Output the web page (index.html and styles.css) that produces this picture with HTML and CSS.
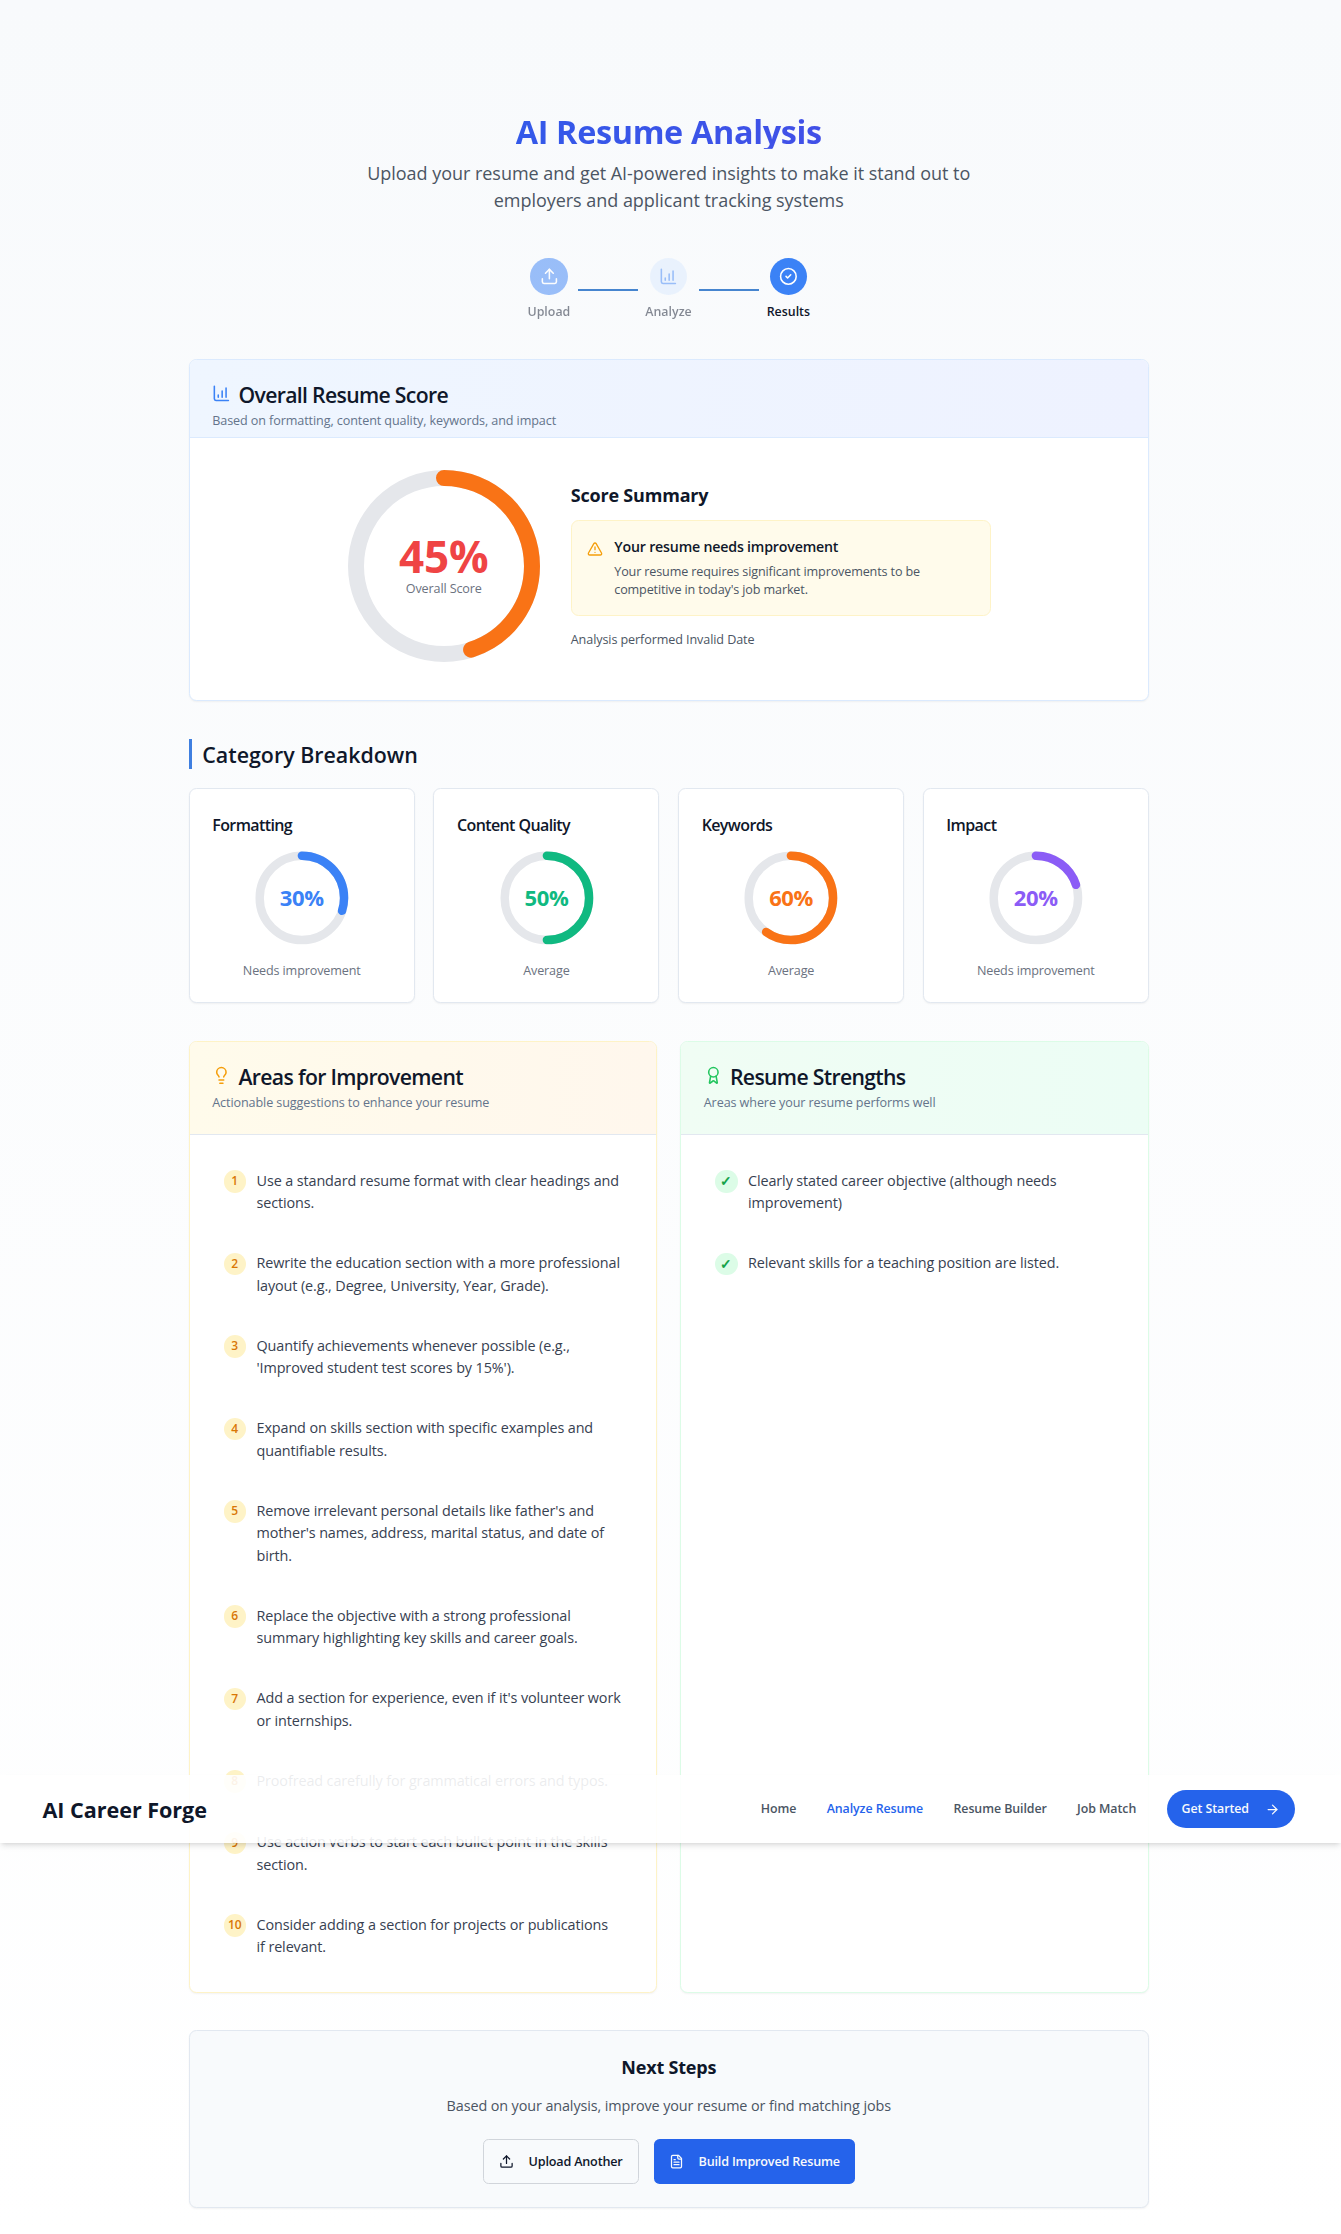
FILE: index.html
```html
<!DOCTYPE html>
<html lang="en">
<head>
<meta charset="utf-8">
<title>AI Resume Analysis</title>
<link rel="stylesheet" href="styles.css">
</head>
<body>
<main class="page">
  <section class="hero">
    <h1 class="hero-title">AI Resume Analysis</h1>
    <p class="hero-text">Upload your resume and get AI-powered insights to make it stand out to<br>employers and applicant tracking systems</p>
  </section>

  <div class="steps">
    <div class="step step-done">
      <span class="step-dot dot-blue"><svg class="icon" viewBox="0 0 24 24"><path d="M12 3v12"/><path d="m17 8-5-5-5 5"/><path d="M21 15v4a2 2 0 0 1-2 2H5a2 2 0 0 1-2-2v-4"/></svg></span>
      <span class="step-label">Upload</span>
    </div>
    <span class="step-line"></span>
    <div class="step step-done">
      <span class="step-dot dot-pale"><svg class="icon" viewBox="0 0 24 24"><path d="M3 3v16a2 2 0 0 0 2 2h16"/><path d="M18 17V5"/><path d="M13 17V9"/><path d="M8 17v-3"/></svg></span>
      <span class="step-label">Analyze</span>
    </div>
    <span class="step-line"></span>
    <div class="step">
      <span class="step-dot dot-blue"><svg class="icon" viewBox="0 0 24 24"><circle cx="12" cy="12" r="10"/><path d="m9 12 2 2 4-4"/></svg></span>
      <span class="step-label">Results</span>
    </div>
  </div>

  <section class="card score-card">
    <header class="card-head head-blue">
      <h2 class="card-title"><svg class="icon icon-blue" viewBox="0 0 24 24"><path d="M3 3v16a2 2 0 0 0 2 2h16"/><path d="M18 17V5"/><path d="M13 17V9"/><path d="M8 17v-3"/></svg><span>Overall Resume Score</span></h2>
      <p class="card-desc">Based on formatting, content quality, keywords, and impact</p>
    </header>
    <div class="score-body">
      <div class="gauge gauge-lg">
        <svg viewBox="0 0 192 192"><circle class="track" cx="96" cy="96" r="88"/><circle class="arc arc-orange" cx="96" cy="96" r="88" pathLength="100" stroke-dasharray="45 100"/></svg>
        <div class="gauge-label"><strong class="score">45%</strong><span class="score-caption">Overall Score</span></div>
      </div>
      <div class="summary">
        <h3 class="sub-title">Score Summary</h3>
        <div class="alert">
          <svg class="icon alert-icon" viewBox="0 0 24 24"><path d="m21.73 18-8-14a2 2 0 0 0-3.48 0l-8 14A2 2 0 0 0 4 21h16a2 2 0 0 0 1.73-3"/><path d="M12 9v4"/><path d="M12 17h.01"/></svg>
          <div>
            <h4 class="alert-title">Your resume needs improvement</h4>
            <p class="alert-text">Your resume requires significant improvements to be<br>competitive in today's job market.</p>
          </div>
        </div>
        <p class="performed">Analysis performed Invalid Date</p>
      </div>
    </div>
  </section>

  <h2 class="section-title">Category Breakdown</h2>
  <section class="categories">
    <article class="card category">
      <h3 class="category-title">Formatting</h3>
      <div class="gauge gauge-sm">
        <svg viewBox="0 0 100 100"><circle class="track" cx="50" cy="50" r="45"/><circle class="arc arc-blue" cx="50" cy="50" r="45" pathLength="100" stroke-dasharray="30 100"/></svg>
        <strong class="gauge-label text-blue">30%</strong>
      </div>
      <p class="category-note">Needs improvement</p>
    </article>
    <article class="card category">
      <h3 class="category-title">Content Quality</h3>
      <div class="gauge gauge-sm">
        <svg viewBox="0 0 100 100"><circle class="track" cx="50" cy="50" r="45"/><circle class="arc arc-green" cx="50" cy="50" r="45" pathLength="100" stroke-dasharray="50 100"/></svg>
        <strong class="gauge-label text-green">50%</strong>
      </div>
      <p class="category-note">Average</p>
    </article>
    <article class="card category">
      <h3 class="category-title">Keywords</h3>
      <div class="gauge gauge-sm">
        <svg viewBox="0 0 100 100"><circle class="track" cx="50" cy="50" r="45"/><circle class="arc arc-orange" cx="50" cy="50" r="45" pathLength="100" stroke-dasharray="60 100"/></svg>
        <strong class="gauge-label text-orange">60%</strong>
      </div>
      <p class="category-note">Average</p>
    </article>
    <article class="card category">
      <h3 class="category-title">Impact</h3>
      <div class="gauge gauge-sm">
        <svg viewBox="0 0 100 100"><circle class="track" cx="50" cy="50" r="45"/><circle class="arc arc-violet" cx="50" cy="50" r="45" pathLength="100" stroke-dasharray="20 100"/></svg>
        <strong class="gauge-label text-violet">20%</strong>
      </div>
      <p class="category-note">Needs improvement</p>
    </article>
  </section>

  <section class="panels">
    <article class="card panel panel-amber">
      <header class="card-head head-amber">
        <h2 class="card-title"><svg class="icon icon-amber" viewBox="0 0 24 24"><path d="M15 14c.2-1 .7-1.7 1.5-2.5 1-.9 1.5-2.2 1.5-3.5A6 6 0 0 0 6 8c0 1 .2 2.2 1.5 3.5.7.7 1.3 1.5 1.5 2.5"/><path d="M9 18h6"/><path d="M10 22h4"/></svg><span>Areas for Improvement</span></h2>
        <p class="card-desc">Actionable suggestions to enhance your resume</p>
      </header>
      <ol class="items">
        <li class="item"><span class="badge badge-amber">1</span><p>Use a standard resume format with clear headings and<br>sections.</p></li>
        <li class="item"><span class="badge badge-amber">2</span><p>Rewrite the education section with a more professional<br>layout (e.g., Degree, University, Year, Grade).</p></li>
        <li class="item"><span class="badge badge-amber">3</span><p>Quantify achievements whenever possible (e.g.,<br>'Improved student test scores by 15%').</p></li>
        <li class="item"><span class="badge badge-amber">4</span><p>Expand on skills section with specific examples and<br>quantifiable results.</p></li>
        <li class="item"><span class="badge badge-amber">5</span><p>Remove irrelevant personal details like father's and<br>mother's names, address, marital status, and date of<br>birth.</p></li>
        <li class="item"><span class="badge badge-amber">6</span><p>Replace the objective with a strong professional<br>summary highlighting key skills and career goals.</p></li>
        <li class="item"><span class="badge badge-amber">7</span><p>Add a section for experience, even if it's volunteer work<br>or internships.</p></li>
        <li class="item"><span class="badge badge-amber">8</span><p>Proofread carefully for grammatical errors and typos.</p></li>
        <li class="item"><span class="badge badge-amber">9</span><p>Use action verbs to start each bullet point in the skills<br>section.</p></li>
        <li class="item"><span class="badge badge-amber">10</span><p>Consider adding a section for projects or publications<br>if relevant.</p></li>
      </ol>
    </article>
    <article class="card panel panel-green">
      <header class="card-head head-green">
        <h2 class="card-title"><svg class="icon icon-green" viewBox="0 0 24 24"><path d="m15.477 12.89 1.515 8.526a.5.5 0 0 1-.81.47l-3.58-2.687a1 1 0 0 0-1.197 0l-3.586 2.686a.5.5 0 0 1-.81-.469l1.514-8.526"/><circle cx="12" cy="8" r="6"/></svg><span>Resume Strengths</span></h2>
        <p class="card-desc">Areas where your resume performs well</p>
      </header>
      <ul class="items">
        <li class="item"><span class="badge badge-green">✓</span><p>Clearly stated career objective (although needs<br>improvement)</p></li>
        <li class="item"><span class="badge badge-green">✓</span><p>Relevant skills for a teaching position are listed.</p></li>
      </ul>
    </article>
  </section>

  <section class="card next">
    <h3 class="sub-title">Next Steps</h3>
    <p class="next-text">Based on your analysis, improve your resume or find matching jobs</p>
    <div class="actions">
      <button class="btn btn-outline"><svg class="icon" viewBox="0 0 24 24"><path d="M12 3v12"/><path d="m17 8-5-5-5 5"/><path d="M21 15v4a2 2 0 0 1-2 2H5a2 2 0 0 1-2-2v-4"/></svg><span>Upload Another</span></button>
      <button class="btn btn-primary"><svg class="icon" viewBox="0 0 24 24"><path d="M15 2H6a2 2 0 0 0-2 2v16a2 2 0 0 0 2 2h12a2 2 0 0 0 2-2V7Z"/><path d="M14 2v4a2 2 0 0 0 2 2h4"/><path d="M10 9H8"/><path d="M16 13H8"/><path d="M16 17H8"/></svg><span>Build Improved Resume</span></button>
    </div>
  </section>
</main>

<header class="navbar">
  <a class="brand">AI Career Forge</a>
  <nav class="nav">
    <a class="nav-link">Home</a>
    <a class="nav-link active">Analyze Resume</a>
    <a class="nav-link">Resume Builder</a>
    <a class="nav-link">Job Match</a>
    <button class="cta"><span>Get Started</span><svg class="icon" viewBox="0 0 24 24"><path d="M5 12h14"/><path d="m12 5 7 7-7 7"/></svg></button>
  </nav>
</header>
</body>
</html>
```
FILE: styles.css
```css
* { box-sizing: border-box; }
body, h1, h2, h3, h4, p, ol, ul { margin: 0; padding: 0; font-weight: inherit; }
body {
  min-height: 2234px;
  font-family: "Open Sans", "Noto Sans", sans-serif;
  font-size: 14.4px;
  line-height: 22.5px;
  color: #0f172a;
  background: linear-gradient(to bottom, #f8fafc, #ffffff);
}
button { font: inherit; letter-spacing: inherit; border: 0; }
.icon {
  width: 18.75px; height: 18.75px; flex: none;
  fill: none; stroke: currentColor; stroke-width: 2; stroke-linecap: round; stroke-linejoin: round;
}
.page { width: 960px; margin: 0 0 0 188.75px; padding-top: 115px; }

.hero { text-align: center; }
.hero-title {
  width: max-content; margin: 0 auto;
  font-size: 32.4px; font-weight: 700; line-height: 33.75px; letter-spacing: -.34px;
  background: linear-gradient(to right, #2563eb, #4f46e5); background-size: 960px; background-position: center;
  -webkit-background-clip: text; background-clip: text; color: transparent;
}
.hero-text { margin-top: 11.25px; font-size: 18px; line-height: 27px; letter-spacing: -.03px; color: #4b5563; }

.steps { display: flex; justify-content: center; align-items: center; margin-top: 43.75px; }
.step { display: flex; flex-direction: column; align-items: center; }
.step-done { opacity: .5; }
.step-dot { display: grid; place-items: center; width: 37.5px; height: 37.5px; border-radius: 50%; }
.dot-blue { background: #3b82f6; color: #fff; }
.dot-pale { background: #dbeafe; color: #3b82f6; }
.step-label { margin-top: 8px; font-size: 12.4px; font-weight: 600; line-height: 18.75px; }
.step-line { width: 60px; height: 2px; margin: 0 7.5px; background: #4685cf; }

.card { background: #fff; border: 1px solid #e2e8f0; border-radius: 7.5px; box-shadow: 0 1px 2px rgba(0,0,0,.05); overflow: hidden; }
.card-head { padding: 22.5px; border-bottom: 1px solid #e2e8f0; }
.card-title { display: flex; align-items: center; gap: 7.5px; height: 22.5px; font-size: 21.2px; font-weight: 600; line-height: 22.5px; letter-spacing: -.67px; }
.card-title span { margin-top: 2.6px; }
.card-desc { margin: 6.8px 0 -1.2px; font-size: 12.6px; line-height: 18.75px; letter-spacing: -.1px; color: #64748b; }
.icon-blue { color: #3b82f6; }
.icon-amber { color: #f59e0b; }
.icon-green { color: #22c55e; }

.score-card { height: 342px; margin-top: 37px; border-color: #dbeafe; }
.head-blue { padding-bottom: 7.5px; background: linear-gradient(to right, #eff6ff, #eef2ff); border-color: #dbeafe; }
.score-body { display: flex; align-items: center; gap: 31px; padding: 32px 0 0 158px; }
.gauge { position: relative; display: grid; place-items: center; }
.gauge svg { grid-area: 1 / 1; transform: rotate(-90deg); }
.gauge-label { grid-area: 1 / 1; z-index: 1; }
.gauge circle { fill: none; stroke-width: 16; }
.gauge .track { stroke: #e5e7eb; }
.gauge .arc { stroke-linecap: round; }
.gauge .arc-blue { stroke: #3b82f6; }
.gauge .arc-green { stroke: #10b981; }
.gauge .arc-orange { stroke: #f97316; }
.gauge .arc-violet { stroke: #8b5cf6; }
.gauge-lg svg { width: 192px; height: 192px; }
.gauge-lg .gauge-label { display: flex; flex-direction: column; align-items: center; }
.score { font-size: 44px; line-height: 45px; letter-spacing: -.2px; color: #ef4444; }
.score-caption { margin: 1.5px 0 -1.5px; font-size: 12.6px; line-height: 18.75px; letter-spacing: -.13px; color: #6b7280; }
.summary { width: 420px; }
.sub-title { font-size: 18px; font-weight: 700; line-height: 26.25px; letter-spacing: -.2px; }
.alert { display: flex; gap: 11.5px; height: 96px; margin-top: 11px; padding: 15px; background: #fffbeb; border: 1px solid #fef3c7; border-radius: 7.5px; }
.alert-icon { width: 16px; height: 16px; margin-top: 5px; color: #f59e0b; }
.alert-title { font-size: 14.2px; font-weight: 600; line-height: 22.5px; letter-spacing: -.19px; }
.alert-text { margin-top: 4.5px; font-size: 12.6px; line-height: 18px; letter-spacing: -.14px; color: #4b5563; }
.performed { margin-top: 15px; font-size: 12.6px; line-height: 18.75px; letter-spacing: -.1px; color: #4b5563; }

.section-title { height: 30px; margin-top: 38px; padding-left: 10.5px; border-left: 3px solid #3f7fe0; font-size: 21.4px; font-weight: 600; line-height: 32px; }
.categories { display: grid; grid-template-columns: repeat(4, 1fr); gap: 18.75px; margin-top: 19px; }
.category { height: 215px; padding: 22.5px; }
.category-title { font-size: 16px; font-weight: 600; line-height: 27px; letter-spacing: -.6px; }
.gauge-sm { margin-top: 12px; font-size: 22px; letter-spacing: -.35px; }
.gauge-sm svg { width: 93.75px; height: 93.75px; }
.gauge-sm circle { stroke-width: 9; }
.text-blue { color: #3b82f6; }
.text-green { color: #10b981; }
.text-orange { color: #f97316; }
.text-violet { color: #8b5cf6; }
.category-note { margin-top: 18px; text-align: center; font-size: 12.6px; line-height: 18.75px; letter-spacing: -.14px; color: #6b7280; }

.panels { display: grid; grid-template-columns: 1fr 1fr; gap: 23px; margin-top: 38px; }
.panel { height: 952px; }
.panel-amber { border-color: #fef3c7; }
.panel-green { border-color: #dcfce7; }
.head-amber { background: linear-gradient(to right, #fffbeb, #fff7ed); }
.head-green { background: linear-gradient(to right, #f0fdf4, #ecfdf5); }
.items { display: flex; flex-direction: column; gap: 15px; padding: 22.5px; list-style: none; }
.item { display: flex; align-items: flex-start; gap: 10.5px; padding: 12.3px 0 10.2px 11.25px; letter-spacing: -.11px; color: #374151; }
.badge { display: grid; place-items: center; flex: none; width: 22.5px; height: 22.5px; margin: .8px 0 .7px; border-radius: 50%; font-size: 12px; font-weight: 600; }
.badge-amber { background: #fef3c7; color: #d97706; }
.badge-green { background: #dcfce7; color: #16a34a; font-size: 14px; }

.next { height: 178px; margin-top: 37px; padding: 22.5px; text-align: center; background: #f8fafc; }
.next-text { margin-top: 15px; letter-spacing: -.11px; color: #4b5563; }
.actions { display: flex; justify-content: center; gap: 15px; margin-top: 22.2px; }
.btn { display: flex; align-items: center; gap: 15px; height: 45px; padding: 0 15px; border-radius: 5.6px; font-size: 12.6px; font-weight: 600; letter-spacing: -.18px; }
.btn span { margin-top: 1.5px; }
.btn .icon, .cta .icon { width: 15px; height: 15px; }
.btn-outline { border: 1px solid #d1d5db; background: transparent; color: #0f172a; }
.btn-primary { background: #2563eb; color: #f8fafc; }

.navbar {
  position: absolute; top: 1775px; left: 0; right: 0; z-index: 10;
  display: flex; align-items: center; justify-content: space-between;
  height: 68px; padding: 0 46px 0 42.5px;
  background: rgba(255,255,255,.9);
  box-shadow: 0 4px 6px -1px rgba(0,0,0,.1), 0 2px 4px -2px rgba(0,0,0,.1);
}
.brand { padding-top: 2.4px; font-size: 21.6px; font-weight: 700; letter-spacing: -.05px; }
.nav { display: flex; align-items: center; gap: 30.3px; font-size: 12.4px; font-weight: 600; letter-spacing: -.07px; }
.nav-link { color: #4b5563; }
.nav-link.active { color: #2563eb; }
.cta { display: flex; align-items: center; justify-content: space-between; width: 128.5px; height: 38px; padding: 0 15px; border-radius: 19px; background: #2563eb; color: #f8fafc; font-weight: 600; }
```
